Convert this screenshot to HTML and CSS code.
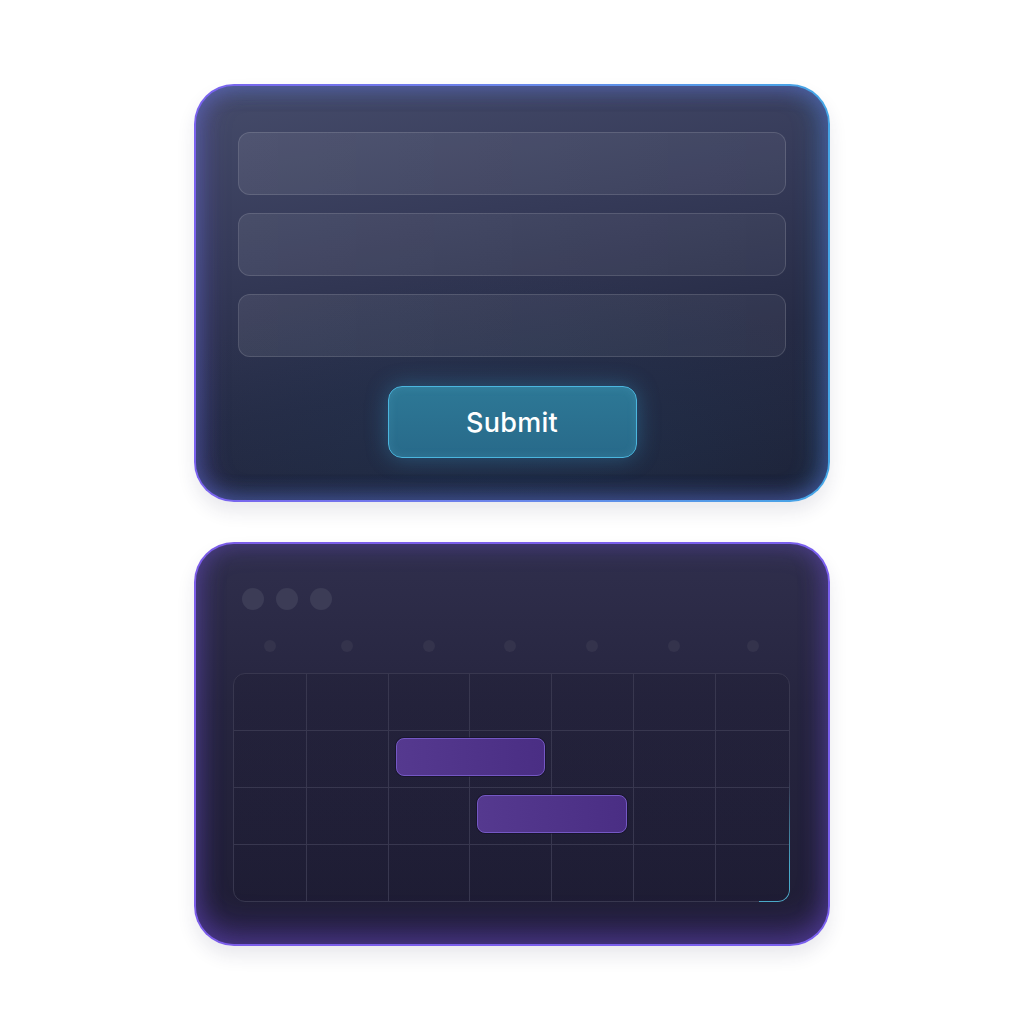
FILE: index.html
```html
<!DOCTYPE html>
<html>
<head>
<meta charset="utf-8">
<link rel="stylesheet" href="styles.css">
</head>
<body>
<main class="stack">
  <section class="card card-form">
    <div class="field"></div>
    <div class="field"></div>
    <div class="field"></div>
    <div class="actions"><button class="submit">Submit</button></div>
  </section>
  <section class="card card-cal">
    <div class="win-dots"><span></span><span></span><span></span></div>
    <div class="day-dots">
      <span></span><span></span><span></span><span></span><span></span><span></span><span></span>
    </div>
    <div class="grid">
      <div class="cell"></div><div class="cell"></div><div class="cell"></div><div class="cell"></div><div class="cell"></div><div class="cell"></div><div class="cell"></div>
      <div class="cell"></div><div class="cell"></div><div class="cell"><div class="bar bar-a"></div></div><div class="cell"></div><div class="cell"></div><div class="cell"></div><div class="cell"></div>
      <div class="cell"></div><div class="cell"></div><div class="cell"></div><div class="cell"><div class="bar bar-b"></div></div><div class="cell"></div><div class="cell"></div><div class="cell"></div>
      <div class="cell"></div><div class="cell"></div><div class="cell"></div><div class="cell"></div><div class="cell"></div><div class="cell"></div><div class="cell"></div>
    </div>
  </section>
</main>
</body>
</html>
```

FILE: styles.css
```css
* { box-sizing: border-box; }
html, body { margin: 0; padding: 0; background: #ffffff; }
body { font-family: Inter, "Open Sans", "Liberation Sans", sans-serif; }

.stack {
  display: flex;
  flex-direction: column;
  align-items: center;
  gap: 40px;
  padding-top: 84px;
  padding-bottom: 60px;
}

.card {
  width: 636px;
  border-radius: 40px;
  border: 2px solid transparent;
  flex: none;
}

.card-form {
  height: 418px;
  padding: 46px 42px 42px;
  display: flex;
  flex-direction: column;
  gap: 18px;
  background:
    radial-gradient(ellipse 60% 40% at 50% 85%, rgba(30,60,90,0.35), rgba(0,0,0,0)) padding-box,
    linear-gradient(170deg, #464c6b 0%, #353a58 35%, #262b45 65%, #1c2136 100%) padding-box,
    linear-gradient(90deg, #7a62ee 0%, #6a86ea 50%, #45a6e6 100%) border-box;
  box-shadow:
    inset 0 0 22px rgba(110, 120, 230, 0.35),
    inset 10px 0 24px rgba(110, 90, 220, 0.25),
    inset -10px 0 24px rgba(60, 150, 220, 0.28),
    0 10px 18px rgba(40, 40, 80, 0.10);
}

.field {
  height: 63px;
  border-radius: 12px;
  border: 1px solid rgba(255, 255, 255, 0.13);
  background: linear-gradient(90deg, rgba(255,255,255,0.08), rgba(255,255,255,0.05));
  flex: none;
}

.actions {
  display: flex;
  justify-content: center;
  margin-top: 11px;
}

.submit {
  width: 249px;
  height: 72px;
  border-radius: 14px;
  border: 1.5px solid #4bb6df;
  background: linear-gradient(180deg, #2d7896 0%, #286a8a 100%);
  color: #ffffff;
  font-family: Inter, "Open Sans", "Liberation Sans", sans-serif;
  font-size: 27px;
  font-weight: 500;
  letter-spacing: 0.3px;
  box-shadow: 0 0 22px rgba(60, 170, 220, 0.35), inset 0 0 10px rgba(120, 210, 240, 0.15);
}

.card-cal {
  height: 404px;
  padding: 44px 38px 43px 37px;
  display: flex;
  flex-direction: column;
  background:
    linear-gradient(180deg, #302f4d 0%, #26253f 40%, #1f1d35 100%) padding-box,
    linear-gradient(90deg, #7b5de8, #7a60ee) border-box;
  box-shadow:
    inset 0 0 26px rgba(120, 90, 230, 0.40),
    inset 0 -18px 30px rgba(110, 70, 210, 0.30),
    0 10px 18px rgba(40, 40, 80, 0.10);
}

.win-dots {
  display: flex;
  gap: 12px;
  padding-left: 9px;
}
.win-dots span {
  width: 22px;
  height: 22px;
  border-radius: 50%;
  background: #3c3c56;
}

.day-dots {
  display: grid;
  grid-template-columns: 73px 82px 81px 82px 82px 82px 75px;
  margin-top: 30px;
  height: 12px;
}
.day-dots span {
  width: 12px;
  height: 12px;
  border-radius: 50%;
  background: #34334c;
  justify-self: center;
}

.grid {
  margin-top: 21px;
  width: 557px;
  display: grid;
  grid-template-columns: 73px 82px 81px 82px 82px 82px 73px;
  grid-template-rows: 57px 57px 57px 56px;
  border: 1px solid #38374f;
  border-radius: 12px;
  position: relative;
  background: linear-gradient(180deg, rgba(30,28,50,0.3), rgba(20,20,40,0.2));
}
.grid::after {
  content: "";
  position: absolute;
  right: -1px;
  bottom: -1px;
  width: 30px;
  height: 120px;
  border-right: 1px solid #4aa9c8;
  border-bottom: 1px solid #4aa9c8;
  border-bottom-right-radius: 12px;
  -webkit-mask-image: linear-gradient(180deg, transparent 0%, #000 70%);
  mask-image: linear-gradient(180deg, transparent 0%, #000 70%);
  pointer-events: none;
}

.cell {
  border-right: 1px solid #38374f;
  border-bottom: 1px solid #38374f;
}
.cell:nth-child(7n) { border-right: none; }
.cell:nth-child(n+22) { border-bottom: none; }

.bar {
  position: relative;
  z-index: 1;
  height: 38px;
  width: 149px;
  margin: 7px 0 0 7px;
  border-radius: 8px;
  border: 1px solid #7458c4;
  background: linear-gradient(90deg, #55398f 0%, #4a2e84 100%);
  box-shadow: 0 0 0 1px rgba(20, 15, 40, 0.6);
}
.bar-b { width: 150px; }
```
